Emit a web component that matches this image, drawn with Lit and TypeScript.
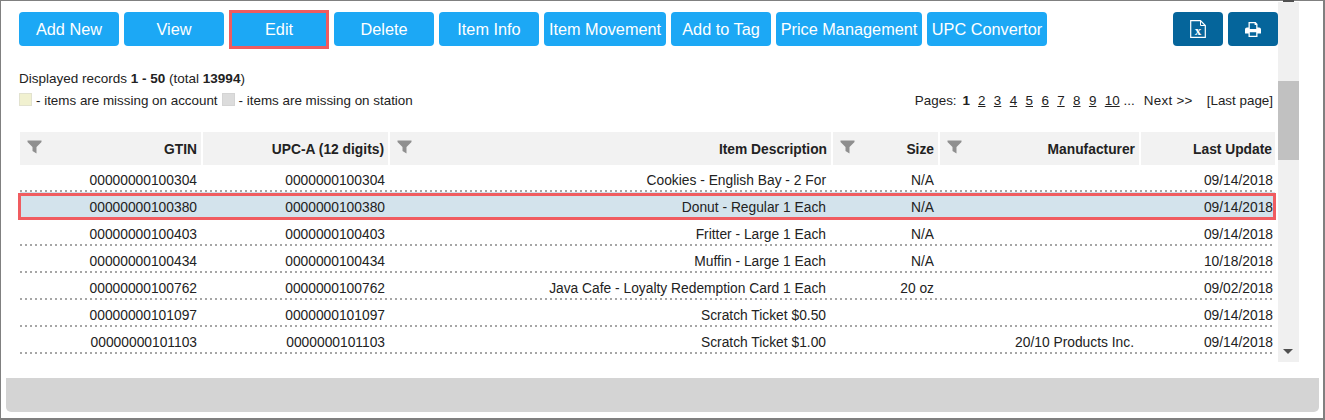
import { LitElement, html, css, svg } from "lit";
import { customElement } from "lit/decorators.js";

const BUTTONS: [string, number][] = [
  ["Add New", 100], ["View", 100], ["Edit", 100], ["Delete", 100], ["Item Info", 100],
  ["Item Movement", 122], ["Add to Tag", 100], ["Price Management", 146], ["UPC Convertor", 120],
];
const ROWS = [
  ["00000000100304", "0000000100304", "Cookies - English Bay - 2 For", "N/A", "", "09/14/2018"],
  ["00000000100380", "0000000100380", "Donut - Regular 1 Each", "N/A", "", "09/14/2018"],
  ["00000000100403", "0000000100403", "Fritter - Large 1 Each", "N/A", "", "09/14/2018"],
  ["00000000100434", "0000000100434", "Muffin - Large 1 Each", "N/A", "", "10/18/2018"],
  ["00000000100762", "0000000100762", "Java Cafe - Loyalty Redemption Card 1 Each", "20 oz", "", "09/02/2018"],
  ["00000000101097", "0000000101097", "Scratch Ticket $0.50", "", "", "09/14/2018"],
  ["00000000101103", "0000000101103", "Scratch Ticket $1.00", "", "20/10 Products Inc.", "09/14/2018"],
];
const HEADERS: [string, boolean][] = [
  ["GTIN", true], ["UPC-A (12 digits)", false], ["Item Description", true],
  ["Size", true], ["Manufacturer", true], ["Last Update", false],
];
const PAGES = ["2", "3", "4", "5", "6", "7", "8", "9", "10"];

const funnel = svg`<svg class="funnel" width="15" height="14" viewBox="0 0 15 14"><path d="M0.5 0.5H14.5V2L9.5 7V13.5L5.5 11V7L0.5 2Z" fill="#8f8f8f"/></svg>`;
const fileX = svg`<svg width="16" height="18" viewBox="0 0 16 18"><path d="M.7 .7H10.5L15.3 5.5V17.3H.7Z" fill="none" stroke="#fff" stroke-width="1.2"/><path d="M10.5 .7V5.5H15.3" fill="none" stroke="#fff" stroke-width="1"/><text x="8" y="14.5" text-anchor="middle" font-family="Liberation Serif, serif" font-weight="700" font-size="13" fill="#fff">x</text></svg>`;
const printer = svg`<svg width="16" height="15" viewBox="0 0 16 15"><path fill="#fff" fill-rule="evenodd" d="M3.5 0H10.6L12.5 1.9V5.5H14C15.2 5.5 16 6.3 16 7.5V11.5H12.5V15H3.5V11.5H0V7.5C0 6.3 .8 5.5 2 5.5H3.5ZM4.8 1.3V7H11.2V3H9.6V1.3ZM4.8 10.2V13.7H11.2V10.2Z"/></svg>`;

@customElement("app-root")
export class AppRoot extends LitElement {
  static styles = css`
    :host { display: block; font-family: "Liberation Sans", Arial, sans-serif; color: #222; }
    .frame { box-sizing: border-box; width: 1325px; height: 420px; border: 1px solid #808080; border-right-width: 2px; border-bottom-width: 2px; padding: 1px 4px 6px 5px; display: flex; flex-direction: column; background: #fff; }
    .scroll { display: flex; height: 360px; }
    .main { flex: none; box-sizing: border-box; width: 1272px; padding: 10px 0 0 13px; font-size: 13.4px; }
    .toolbar { display: flex; gap: 5px; }
    .btn { box-sizing: border-box; height: 34px; border-radius: 4px; background: #1ca8f5; color: #fff; font-size: 16.3px; display: flex; align-items: center; justify-content: center; white-space: nowrap; position: relative; }
    .btn.hl::after { content: ""; position: absolute; inset: -2px 0 -3px; border: 3px solid #f05c60; }
    .btn.hl { border-radius: 0; }
    .spacer { flex: 1; }
    .btn.dark { background: #05659b; width: 50px; }
    .records { margin-top: 24px; height: 18px; line-height: 18px; font-size: 13.5px; }
    .info { display: flex; justify-content: space-between; height: 25px; padding-right: 5px; margin-top: 4px; line-height: 18px; }
    .legend { display: flex; align-items: center; height: 18px; gap: 4px; }
    .sw { width: 13px; height: 13px; box-sizing: border-box; border: 1px solid #e2e2cf; background: #f1f1d0; margin-bottom: 3px; }
    .sw.gray { background: #dcdcdc; border-color: #d4d4d4; }
    .pages { display: flex; height: 18px; margin-left: auto; }
    .pages b { margin-left: 6px; margin-right: 8px; }
    .pages u { margin-right: 8.4px; }
    .pages .dots { margin-left: -4.5px; }
    .pages .next { margin-left: 9px; letter-spacing: 0.3px; }
    .pages .last { margin-left: 14px; }
    .table { margin-top: 15px; margin-left: 1px; width: 1255px; font-size: 13.8px; }
    .row { display: grid; grid-template-columns: 181px 185px 441px 105px 199px 134px; column-gap: 2px; }
    .head { height: 33px; }
    .head .cell { box-sizing: border-box; background: #f2f2f2; font-weight: 700; display: flex; align-items: center; justify-content: flex-end; padding: 1px 4px 0 0; position: relative; }
    .head .cell:last-child { padding-right: 3px; }
    .funnel { position: absolute; left: 7px; top: 8px; }
    .data { height: 27px; box-sizing: border-box; position: relative; line-height: 31px; background-image: linear-gradient(to right, #a6a6a6 2px, transparent 2px); background-size: 5px 2px; background-position: 0 bottom; background-repeat: repeat-x; }
    .data .cell { text-align: right; padding-right: 4px; height: 27px; }
    .data .cell:nth-child(2) { padding-right: 3px; }
    .data .cell:nth-child(3) { padding-right: 5px; }
    .data .cell:nth-child(5) { padding-right: 5px; }
    .data .cell:nth-child(6) { padding-right: 2px; }
    .data.sel { background: #d3e3ec; }
    .data.sel::after { content: ""; position: absolute; inset: 1px -1px -1px -2px; border: 3px solid #f05c60; pointer-events: none; }
    .bar { width: 21px; background: #f0f0f0; position: relative; }
    .thumb { position: absolute; left: 0; right: 0; top: 79px; height: 79px; background: #c1c1c1; }
    .up { position: absolute; left: 5px; top: -2px; width: 11px; height: 2px; background: #505050; }
    .down { position: absolute; left: 5px; bottom: 8px; border-left: 5.5px solid transparent; border-right: 5.5px solid transparent; border-top: 5px solid #505050; }
    .foot { margin-top: 16px; height: 34px; background: #d4d4d4; border-radius: 0 0 5px 5px; }
  `;

  render() {
    return html`<div class="frame">
      <div class="scroll">
        <div class="main">
          <div class="toolbar">
            ${BUTTONS.map(([t, w]) => html`<div class="btn ${t === "Edit" ? "hl" : ""}" style="width:${w}px">${t}</div>`)}
            <div class="spacer"></div>
            <div class="btn dark">${fileX}</div>
            <div class="btn dark">${printer}</div>
          </div>
          <div class="records">Displayed records <b>1 - 50</b> (total <b>13994</b>)</div>
          <div class="info">
            <div class="legend"><span class="sw"></span><span>- items are missing on account</span><span class="sw gray"></span><span>- items are missing on station</span></div>
            <div class="pages"><span>Pages:</span><b>1</b>${PAGES.map((p) => html`<u>${p}</u>`)}<span class="dots">...</span><span class="next">Next &gt;&gt;</span><span class="last">[Last page]</span></div>
          </div>
          <div class="table">
            <div class="row head">${HEADERS.map(([h, f]) => html`<div class="cell">${f ? funnel : ""}${h}</div>`)}</div>
            ${ROWS.map((r, i) => html`<div class="row data ${i === 1 ? "sel" : ""}">${r.map((c) => html`<div class="cell">${c}</div>`)}</div>`)}
          </div>
        </div>
        <div class="bar"><div class="up"></div><div class="thumb"></div><div class="down"></div></div>
      </div>
      <div class="foot"></div>
    </div>`;
  }
}
